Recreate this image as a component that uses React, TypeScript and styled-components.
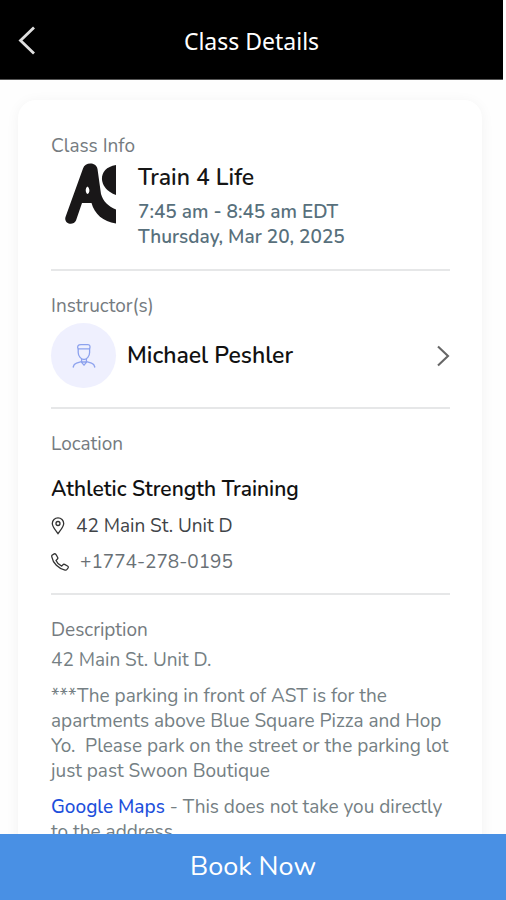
import React from "react";
import styled, { createGlobalStyle } from "styled-components";

const GlobalStyle = createGlobalStyle`
  *, *::before, *::after { box-sizing: border-box; }
  body { margin: 0; background: #fff; font-family: Nunito, Lato, "Open Sans", sans-serif; }
  h1, h2, h3, p { margin: 0; }
  button { font: inherit; border: 0; padding: 0; background: none; cursor: pointer; }
`;

const Screen = styled.div`
  height: 100vh;
  display: flex;
  flex-direction: column;
  background: #fefefe;
`;

const Header = styled.header`
  flex: none;
  display: grid;
  grid-template-columns: 56px 1fr 56px;
  align-items: center;
  height: 80px;
  margin-right: 3px;
  background: #000;
  color: #fff;
  border-bottom: 1px solid #555;
`;

const BackButton = styled.button`
  display: flex;
  padding-left: 16px;
  color: #e0e0e0;
`;

const ScreenTitle = styled.h1`
  padding-top: 3px;
  text-align: center;
  font: 400 23px/32px "Noto Sans", "Open Sans", sans-serif;
`;

const Content = styled.main`
  flex: 1;
  min-height: 0;
  overflow-y: auto;
  scrollbar-width: none;
  padding: 20px 24px 20px 18px;
`;

const Card = styled.article`
  padding: 34px 32px 34px 33px;
  border-radius: 18px;
  background: #fff;
  box-shadow: 0 2px 14px rgba(0, 0, 0, 0.05);
`;

const Section = styled.section<{ $last?: boolean }>`
  padding-bottom: 19px;
  margin-bottom: 23px;
  border-bottom: ${(p) => (p.$last ? "0" : "2px solid #e6e7e8")};
`;

const Label = styled.h2`
  color: #757b80;
  font-size: 19px;
  line-height: 24px;
  font-weight: 400;
`;

const ClassRow = styled.div`
  display: flex;
  gap: 21px;
  padding-top: 5px;
`;

const Logo = styled.svg`
  flex: none;
  width: 66px;
  height: 64px;
`;

const ClassName = styled.h3`
  margin-bottom: 7px;
  color: #161616;
  font-size: 23px;
  line-height: 30px;
  font-weight: 600;
`;

const Schedule = styled.p`
  color: #58707c;
  font-size: 19px;
  line-height: 25px;
  font-weight: 600;
`;

const InstructorButton = styled.button`
  display: flex;
  align-items: center;
  gap: 11px;
  width: 100%;
  margin-top: 5px;
  color: #111;
  text-align: left;
`;

const Avatar = styled.span`
  display: grid;
  place-items: center;
  flex: none;
  width: 65px;
  height: 65px;
  border-radius: 50%;
  background: #eff0fe;
`;

const InstructorName = styled.span`
  flex: 1;
  font-size: 23px;
  line-height: 29px;
  font-weight: 600;
`;

const Venue = styled.h3`
  margin-top: 20px;
  color: #111;
  font-size: 21px;
  line-height: 26px;
  font-weight: 600;
`;

const ContactLine = styled.p<{ $muted?: boolean }>`
  display: flex;
  align-items: center;
  gap: 11px;
  margin-top: 12px;
  color: ${(p) => (p.$muted ? "#697075" : "#404347")};
  font-size: 19px;
  line-height: 24px;
  svg { flex: none; color: #333; }
`;

const PhoneLink = styled.a`
  color: inherit;
  text-decoration: none;
`;

const Paragraph = styled.p`
  margin-top: 11px;
  color: #757f84;
  font-size: 19px;
  line-height: 25px;
  white-space: pre-wrap;
  ${Label} + & { margin-top: 6px; }
`;

const MapLink = styled.a`
  color: #1d4fdc;
  font-weight: 500;
  text-decoration: none;
`;

const BookButton = styled.button`
  flex: none;
  height: 66px;
  background: #4990e4;
  color: #fff;
  font-size: 27px;
  line-height: 32px;
`;

export default function App() {
  return (
    <Screen>
      <GlobalStyle />
      <Header>
        <BackButton aria-label="Back">
          <svg width="22" height="32" viewBox="0 0 22 32" fill="none" stroke="currentColor" strokeWidth="2.8">
            <path d="M18 3.5 4.5 16.5 18 29.5" />
          </svg>
        </BackButton>
        <ScreenTitle>Class Details</ScreenTitle>
      </Header>
      <Content>
        <Card>
          <Section>
            <Label>Class Info</Label>
            <ClassRow>
              <Logo viewBox="0 0 66 64" role="img" aria-label="AST">
                <path
                  fill="#191718"
                  fillRule="evenodd"
                  d="M32 5.5C34-1 45-1.2 46.5 6L50 31C52 38 57 43.5 65 46.5V60.5C52 58.5 43.5 51 40.5 40H31L25 57.5C22 63.5 12.5 60.5 14.5 54ZM36.5 23.5C34 25 34.3 30 36.5 31 39 30 39 25 36.5 23.5Z"
                />
                <path fill="#191718" d="M65 2V32C47 26 45.500 5 65 2Z" />
              </Logo>
              <div>
                <ClassName>Train 4 Life</ClassName>
                <Schedule>7:45 am - 8:45 am EDT</Schedule>
                <Schedule>Thursday, Mar 20, 2025</Schedule>
              </div>
            </ClassRow>
          </Section>

          <Section>
            <Label>Instructor(s)</Label>
            <InstructorButton>
              <Avatar>
                <svg width="24" height="26" viewBox="0 0 24 26" fill="none" stroke="#8da2ee" strokeWidth="1.3" strokeLinecap="round" strokeLinejoin="round">
                  <path d="M6.200 5.800C4.800 3.500 6 1.700 9 1.700H16C18 1.700 18.500 3.500 17.600 5.800" />
                  <path d="M6.200 5.800H17.600V9.500C17.600 13.300 14.800 16.500 12 16.500S6.200 13.300 6.200 9.500Z" />
                  <path d="M9.600 16V19.300L12 22.200 14.400 19.300V16M9.600 19H14.400" />
                  <path d="M9.400 18.700 4.500 20.200C2.600 20.800 1.600 22 1.200 24M14.600 18.700 19.500 20.200C21.400 20.800 22.400 22 22.800 24" />
                </svg>
              </Avatar>
              <InstructorName>Michael Peshler</InstructorName>
              <svg width="14" height="24" viewBox="0 0 14 24" fill="none" stroke="#666" strokeWidth="2.1">
                <path d="M2 2.500 12 12 2 21.500" />
              </svg>
            </InstructorButton>
          </Section>

          <Section>
            <Label>Location</Label>
            <Venue>Athletic Strength Training</Venue>
            <ContactLine>
              <svg width="14" height="18" viewBox="0 0 13 18" fill="none" stroke="currentColor" strokeWidth="1.3">
                <path d="M6.500 16.700C4 13.200.800 9.700.800 6.500a5.700 5.700 0 0 1 11.400 0C12.200 9.700 9 13.200 6.500 16.700Z" />
                <circle cx="6.500" cy="6.500" r="2" />
              </svg>
              42 Main St. Unit D
            </ContactLine>
            <ContactLine $muted>
              <svg width="18" height="18" viewBox="0 0 18 18" fill="none" stroke="currentColor" strokeWidth="1.3" strokeLinejoin="round">
                <path d="M1 2.300 3.200.900C4 .500 4.700.800 5.100 1.600L6.700 4.500C7 5.200 6.800 5.800 6.200 6.300L5 7.400C6.200 10.200 8 11.900 10.700 13.100L11.800 11.800C12.300 11.200 12.900 11.100 13.600 11.400L16.500 13C17.200 13.400 17.500 14.100 17.100 14.800L15.900 16.500C15.500 17.100 14.800 17.300 14 17.100 7.400 15.700 2 10.200.800 3.800.700 3.100.600 2.700 1 2.300Z" />
              </svg>
              <PhoneLink href="tel:+17742780195">+1774-278-0195</PhoneLink>
            </ContactLine>
          </Section>

          <Section $last>
            <Label>Description</Label>
            <Paragraph>42 Main St. Unit D.</Paragraph>
            <Paragraph>
              {"***The parking in front of AST is for the apartments above Blue Square Pizza and Hop Yo.  Please park on the street or the parking lot just past Swoon Boutique"}
            </Paragraph>
            <Paragraph>
              <MapLink href="#map">Google Maps</MapLink> - This does not take you directly to the address.
            </Paragraph>
          </Section>
        </Card>
      </Content>
      <BookButton>Book Now</BookButton>
    </Screen>
  );
}
